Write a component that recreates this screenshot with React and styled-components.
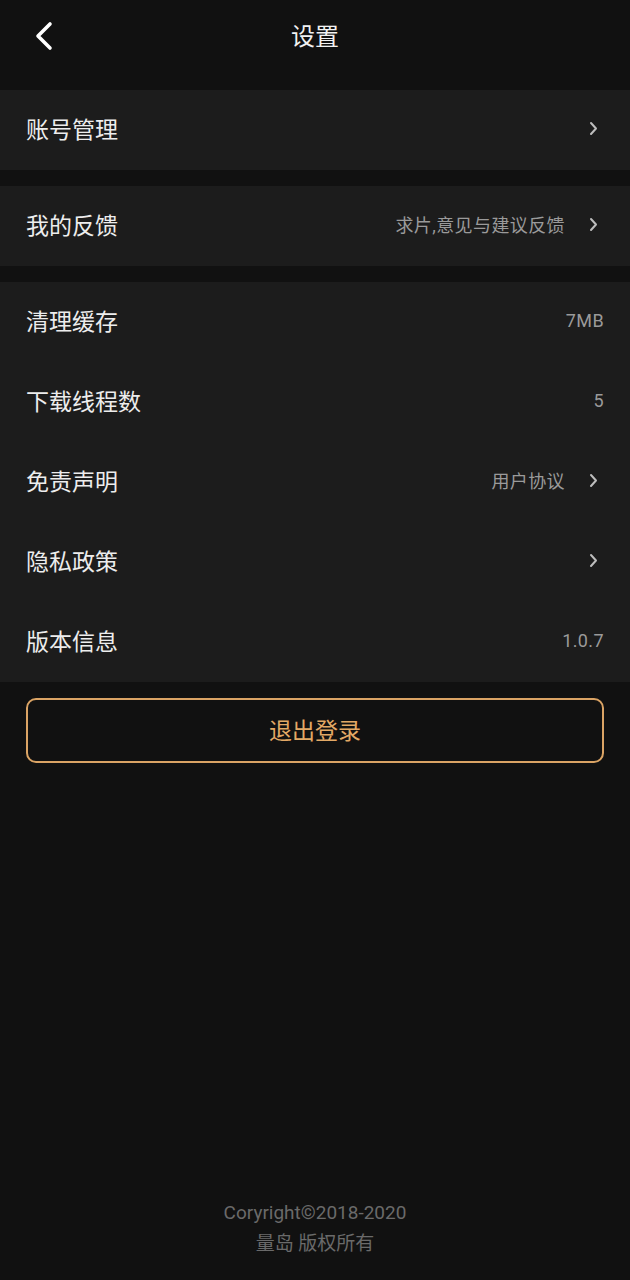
import styled, { createGlobalStyle } from 'styled-components'

const GlobalStyle = createGlobalStyle`
	body {
		margin: 0;
		background: #111111;
		font-family: Roboto, "Noto Sans CJK SC", sans-serif;
	}
`

const Page = styled.div`
	display: flex;
	flex-direction: column;
	min-height: 100vh;
	background: #111111;
`

const Header = styled.div`
	display: flex;
	align-items: center;
	justify-content: center;
	position: relative;
	height: 74px;
	margin-bottom: 16px;
	color: #f2f2f2;
	font-size: 24px;
`

const Title = styled.div`
	margin-top: -5px;
`

const BackButton = styled.div`
	position: absolute;
	left: 33px;
	top: 21px;
	width: 22px;
	height: 30px;
	display: flex;
`

const Group = styled.div`
	display: flex;
	flex-direction: column;
	background: #1c1c1c;
	margin-bottom: 16px;
`

const Row = styled.div`
	display: flex;
	align-items: center;
	height: 80px;
	padding: 0 26px 4px;
	box-sizing: border-box;
`

const Label = styled.div`
	flex: 1;
	color: #ededed;
	font-size: 23px;
`

const Value = styled.div`
	color: #9a9a9a;
	font-size: 18px;
	letter-spacing: 0.4px;
`

const Chevron = styled.div`
	display: flex;
	margin-left: 24px;
	margin-right: 6px;
`

const LogoutButton = styled.div`
	display: flex;
	align-items: center;
	justify-content: center;
	margin: 0 26px;
	height: 65px;
	padding-bottom: 3px;
	box-sizing: border-box;
	border: 2px solid #dba465;
	border-radius: 10px;
	color: #e3a966;
	font-size: 23px;
`

const Footer = styled.div`
	margin-top: auto;
	display: flex;
	flex-direction: column;
	align-items: center;
	gap: 6px;
	padding-bottom: 24px;
	color: #6a6a6a;
	font-size: 19px;
	line-height: 25px;
`

const Arrow = () => (
	<Chevron>
		<svg width="9" height="15" viewBox="0 0 9 15">
			<path d="M2 2 L7 7.5 L2 13" fill="none" stroke="#bdbdbd" strokeWidth="2" strokeLinecap="round" strokeLinejoin="round" />
		</svg>
	</Chevron>
)

const SettingRow = ({ label, value, arrow }) => (
	<Row>
		<Label>{label}</Label>
		{value && <Value>{value}</Value>}
		{arrow && <Arrow />}
	</Row>
)

export default function App() {
	return (
		<Page>
			<GlobalStyle />
			<Header>
				<BackButton>
					<svg width="22" height="30" viewBox="0 0 22 30">
						<path d="M17 3 L5 15 L17 27" fill="none" stroke="#ffffff" strokeWidth="3.6" strokeLinecap="round" strokeLinejoin="round" />
					</svg>
				</BackButton>
				<Title>设置</Title>
			</Header>
			<Group>
				<SettingRow label="账号管理" arrow />
			</Group>
			<Group>
				<SettingRow label="我的反馈" value="求片,意见与建议反馈" arrow />
			</Group>
			<Group>
				<SettingRow label="清理缓存" value="7MB" />
				<SettingRow label="下载线程数" value="5" />
				<SettingRow label="免责声明" value="用户协议" arrow />
				<SettingRow label="隐私政策" arrow />
				<SettingRow label="版本信息" value="1.0.7" />
			</Group>
			<LogoutButton>退出登录</LogoutButton>
			<Footer>
				<div>Coryright©2018-2020</div>
				<div>量岛 版权所有</div>
			</Footer>
		</Page>
	)
}
